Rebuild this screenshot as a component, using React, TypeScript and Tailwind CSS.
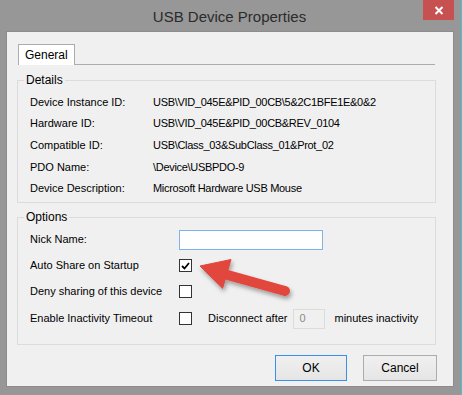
import React from "react";

const font = { fontFamily: '"Liberation Sans", Arial, sans-serif' };

function Check({ checked }: { checked?: boolean }) {
  return (
    <div className="shrink-0 w-[13px] h-[13px] border border-[#333333] bg-white flex items-center justify-center">
      {checked && (
        <svg width="9" height="8" viewBox="0 0 9 8">
          <path d="M1 4 L3.5 6.5 L8 1" fill="none" stroke="#000" strokeWidth="1.8" />
        </svg>
      )}
    </div>
  );
}

function Group({ title, children, className }: { title: string; children: React.ReactNode; className?: string }) {
  return (
    <div className={"relative border border-[#dcdcdc] " + (className ?? "")}>
      <div className="absolute left-[6px] top-[-8px] bg-[#f0f0f0] px-[2px] leading-[14px] text-[12px]">{title}</div>
      {children}
    </div>
  );
}

export default function App() {
  const details: [string, string, string][] = [
    ["Device Instance ID:", "USB\\VID_045E&PID_00CB\\5&2C1BFE1E&0&2", "h-[21px]"],
    ["Hardware ID:", "USB\\VID_045E&PID_00CB&REV_0104", "h-[21px]"],
    ["Compatible ID:", "USB\\Class_03&SubClass_01&Prot_02", "h-[22px]"],
    ["PDO Name:", "\\Device\\USBPDO-9", "h-[22px]"],
    ["Device Description:", "Microsoft Hardware USB Mouse", "h-[21px]"],
  ];
  return (
    <div className="relative w-[462px] h-[395px] bg-[#979797] flex flex-col text-[11px] text-[#000] whitespace-nowrap" style={font}>
      <div className="absolute right-0 top-0 w-[1px] h-full bg-[#45c3d2]" />
      {/* title bar */}
      <div className="h-[31px] flex items-start shrink-0">
        <div className="flex-1 text-center text-[15px] text-[#2b2b2b] pt-[6px] pl-[36px]">USB Device Properties</div>
        <div className="w-[31px] h-[20px] bg-[#c75050] mr-[8px] flex items-center justify-center">
          <svg width="10" height="9" viewBox="0 0 10 9">
            <path d="M1.5 1 L8.5 8 M8.5 1 L1.5 8" stroke="#fff" strokeWidth="2" />
          </svg>
        </div>
      </div>
      {/* content */}
      <div className="ml-[6px] mr-[8px] mb-[8px] flex-1 border border-[#8c8c8c] bg-[#f0f0f0] flex flex-col">
        {/* tabs */}
        <div className="flex items-end pt-[12px] pl-[11px] pr-[18px]">
          <div className="h-[21px] px-[6px] bg-white border border-[#acacac] border-b-0 flex items-center leading-none text-[12px]">General</div>
          <div className="flex-1 border-b border-[#acacac]" />
        </div>
        <div className="pl-[10px] pr-[17px] pt-[15px] flex flex-col">
          <Group title="Details" className="pt-[11px] pb-[3px] pl-[12px]">
            {details.map(([l, v, h]) => (
              <div key={l} className={"flex items-center " + h}>
                <div className="w-[123px] shrink-0">{l}</div>
                <div className="tracking-[-0.3px]">{v}</div>
              </div>
            ))}
          </Group>
          <Group title="Options" className="mt-[14px] pt-[11px] pb-[12px] pl-[12px]">
            <div className="flex items-center h-[21px]">
              <div className="w-[149px] shrink-0">Nick Name:</div>
              <div className="w-[144px] h-[20px] border border-[#7eb4ea] bg-white" />
            </div>
            <div className="flex items-center h-[27px] mt-[2px]">
              <div className="w-[149px] shrink-0">Auto Share on Startup</div>
              <Check checked />
            </div>
            <div className="flex items-center h-[25px]">
              <div className="w-[149px] shrink-0">Deny sharing of this device</div>
              <Check />
            </div>
            <div className="flex items-center h-[27px] mt-[1px]">
              <div className="w-[149px] shrink-0">Enable Inactivity Timeout</div>
              <Check />
              <div className="ml-[16px]">Disconnect after</div>
              <div className="ml-[6px] shrink-0 w-[32px] h-[20px] border border-[#dcdcdc] bg-[#f0f0f0] text-[#8a8a8a] flex items-center pl-[5px]">0</div>
              <div className="ml-[9px]">minutes inactivity</div>
            </div>
          </Group>
        </div>
        <div className="flex justify-end gap-[16px] pr-[16px] mt-[10px]">
          <button className="w-[72px] h-[26px] border border-[#3c8ee6] bg-[linear-gradient(#f0f0f0,#e5e5e5)] text-[12px]">OK</button>
          <button className="w-[74px] h-[26px] border border-[#acacac] bg-[linear-gradient(#f0f0f0,#e5e5e5)] text-[12px]">Cancel</button>
        </div>
      </div>
      {/* arrow */}
      <svg className="absolute left-0 top-0 pointer-events-none" width="462" height="395">
        <defs>
          <filter id="sh" x="-20%" y="-20%" width="140%" height="160%">
            <feDropShadow dx="1.5" dy="3" stdDeviation="2" floodColor="#000" floodOpacity="0.35" />
          </filter>
        </defs>
        <g filter="url(#sh)" fill="#e2463d" stroke="#e2463d">
          <line x1="224" y1="274" x2="285" y2="291" strokeWidth="10" strokeLinecap="round" />
          <polygon points="200,266 231,259.5 222.6,288.3" strokeWidth="1" strokeLinejoin="round" />
        </g>
      </svg>
    </div>
  );
}
